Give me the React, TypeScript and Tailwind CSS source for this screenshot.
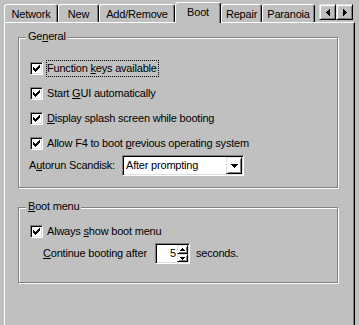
import React from "react";

const sunken =
  "border border-t-[#808080] border-l-[#808080] border-r-white border-b-white shadow-[inset_1px_1px_0_#000,inset_-1px_-1px_0_#dfdfdf]";
const raised =
  "border border-t-[#dfdfdf] border-l-[#dfdfdf] border-r-black border-b-black shadow-[inset_1px_1px_0_#fff,inset_-1px_-1px_0_#808080]";

function Check() {
  return (
    <div className={`w-[13px] h-[13px] bg-white ${sunken} flex items-center justify-center shrink-0`}>
      <svg width="7" height="7" viewBox="0 0 7 7" shapeRendering="crispEdges">
        <path
          d="M0 2h1v3H0zM1 3h1v3H1zM2 4h1v3H2zM3 3h1v3H3zM4 2h1v3H4zM5 1h1v3H5zM6 0h1v3H6z"
          fill="#000"
        />
      </svg>
    </div>
  );
}

function Tab({ label, cls }: { label: React.ReactNode; cls: string }) {
  return (
    <div
      className={`h-[18px] border-t border-l border-r border-white border-r-black shadow-[inset_-1px_0_0_#808080] rounded-t-[3px] flex items-center justify-center shrink-0 ${cls}`}
    >
      {label}
    </div>
  );
}

function ArrowLeft() {
  return (
    <svg width="4" height="7" viewBox="0 0 4 7" shapeRendering="crispEdges">
      <path d="M0 3h1v1H0zM1 2h1v3H1zM2 1h1v5H2zM3 0h1v7H3z" fill="#000" />
    </svg>
  );
}
function ArrowRight() {
  return (
    <svg width="4" height="7" viewBox="0 0 4 7" shapeRendering="crispEdges">
      <path d="M3 3h1v1H3zM2 2h1v3H2zM1 1h1v5H1zM0 0h1v7H0z" fill="#000" />
    </svg>
  );
}
function ArrowDown({ w }: { w: number }) {
  if (w === 7)
    return (
      <svg width="7" height="4" viewBox="0 0 7 4" shapeRendering="crispEdges">
        <path d="M0 0h7v1H0zM1 1h5v1H1zM2 2h3v1H2zM3 3h1v1H3z" fill="#000" />
      </svg>
    );
  return (
    <svg width="5" height="3" viewBox="0 0 5 3" shapeRendering="crispEdges">
      <path d="M0 0h5v1H0zM1 1h3v1H1zM2 2h1v1H2z" fill="#000" />
    </svg>
  );
}
function ArrowUp() {
  return (
    <svg width="5" height="3" viewBox="0 0 5 3" shapeRendering="crispEdges">
      <path d="M0 2h5v1H0zM1 1h3v1H1zM2 0h1v1H2z" fill="#000" />
    </svg>
  );
}

function Row({ children }: { children: React.ReactNode }) {
  return <div className="flex items-center h-[25px]">{children}</div>;
}

export default function App() {
  return (
    <div className="w-[359px] h-[325px] overflow-hidden bg-[#c0c0c0] text-black text-[11px] leading-[13px] tracking-[-0.2px] font-['Liberation_Sans',Arial,sans-serif] select-none">
      {/* Tabs */}
      <div className="flex items-end h-[22px] pl-[4px]">
        <Tab label="Network" cls="w-[54px] pt-[1px]" />
        <Tab label="New" cls="w-[41px] pt-[1px]" />
        <Tab label="Add/Remove" cls="w-[76px] pt-[1px]" />
        <Tab label="Boot" cls="w-[46px] !h-[21px] -mb-[1px] relative z-10 bg-[#c0c0c0] pb-[2px]" />
        <Tab label="Repair" cls="w-[41px] pt-[1px]" />
        <Tab label="Paranoia" cls="w-[53px] pt-[1px]" />
        <div className="ml-[4px] mb-[2px] flex">
          <div className={`w-[17px] h-[16px] ${raised} flex items-center justify-center`}>
            <ArrowLeft />
          </div>
          <div className={`w-[17px] h-[16px] ${raised} flex items-center justify-center`}>
            <ArrowRight />
          </div>
        </div>
      </div>

      {/* Panel */}
      <div className="ml-[4px] w-[351px] h-[320px] border-t border-l border-r border-white border-r-black shadow-[inset_-1px_0_0_#808080] pl-[13px] pt-[14px]">
        {/* General group */}
        <div className="relative w-[320px] h-[151px] border border-[#808080] shadow-[1px_1px_0_#fff,inset_1px_1px_0_#fff] pl-[11px] pt-[18px]">
          <div className="absolute left-[7px] -top-[8px] bg-[#c0c0c0] px-[2px]">
            Ge<u>n</u>eral
          </div>
          <Row>
            <Check />
            <span className="ml-[3px] border border-dotted border-black leading-[15px] pr-[1px]">
              Function <u>k</u>eys available
            </span>
          </Row>
          <Row>
            <Check />
            <span className="ml-[4px]">
              Start <u>G</u>UI automatically
            </span>
          </Row>
          <Row>
            <Check />
            <span className="ml-[4px]">
              <u>D</u>isplay splash screen while booting
            </span>
          </Row>
          <Row>
            <Check />
            <span className="ml-[4px]">
              Allow F4 to boot <u>p</u>revious operating system
            </span>
          </Row>
          <div className="flex items-center h-[21px] -ml-[1px] -mt-[1px]">
            <span className="w-[93px] shrink-0">
              A<u>u</u>torun Scandisk:
            </span>
            <div className={`w-[122px] h-[21px] bg-white ${sunken} flex items-center`}>
              <span className="flex-1 pl-[3px]">After prompting</span>
              <div className={`w-[16px] h-[17px] mr-[1px] ${raised} flex items-center justify-center`}>
                <ArrowDown w={7} />
              </div>
            </div>
          </div>
        </div>

        {/* Boot menu group */}
        <div className="relative mt-[19px] w-[320px] h-[76px] border border-[#808080] shadow-[1px_1px_0_#fff,inset_1px_1px_0_#fff] pl-[11px] pt-[11px]">
          <div className="absolute left-[7px] -top-[8px] bg-[#c0c0c0] px-[2px]">
            <u>B</u>oot menu
          </div>
          <div className="flex items-center h-[24px]">
            <Check />
            <span className="ml-[4px]">
              Always <u>s</u>how boot menu
            </span>
          </div>
          <div className="flex items-center h-[21px] ml-[13px]">
            <span className="w-[112px] shrink-0">
              <u>C</u>ontinue booting after
            </span>
            <div className={`w-[35px] h-[21px] bg-white ${sunken} flex items-stretch`}>
              <div className="flex-1 text-right pr-[1px] flex items-center justify-end">5</div>
              <div className="flex flex-col w-[11px] my-[1px] mr-[1px]">
                <div className={`h-[9px] ${raised} flex items-center justify-center`}>
                  <ArrowUp />
                </div>
                <div className={`h-[8px] ${raised} flex items-center justify-center`}>
                  <ArrowDown w={5} />
                </div>
              </div>
            </div>
            <span className="ml-[6px]">seconds.</span>
          </div>
        </div>
      </div>
    </div>
  );
}
